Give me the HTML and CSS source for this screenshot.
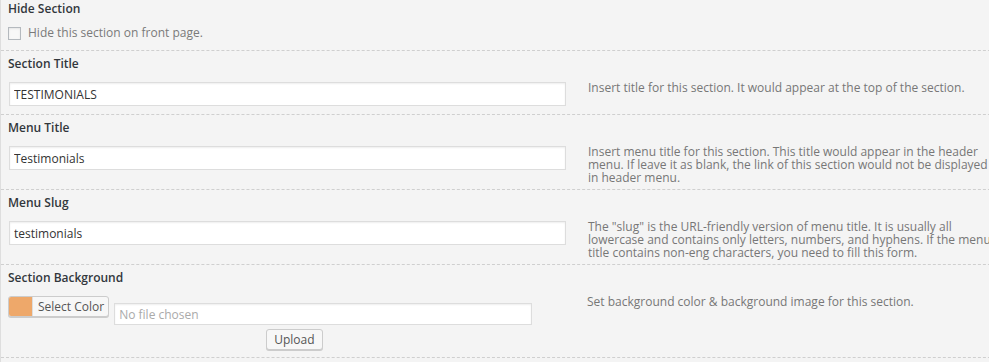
FILE: index.html
```html
<!DOCTYPE html>
<html lang="en">
<head>
    <meta charset="UTF-8">
    <meta name="viewport" content="width=device-width, initial-scale=1.0">
    <title>Section Settings</title>
    <link rel="stylesheet" href="styles.css">
</head>
<body>

<div class="panel">
    <div class="field field-first">
        <div class="field-label">Hide Section</div>
        <label class="check">
            <span class="check-box"></span>
            <span class="check-text">Hide this section on front page.</span>
        </label>
    </div>

    <div class="field">
        <div class="field-label">Section Title</div>
        <div class="field-row">
            <div class="control">
                <input type="text" class="text-input" value="TESTIMONIALS">
            </div>
            <p class="desc">Insert title for this section. It would appear at the top of the section.</p>
        </div>
    </div>

    <div class="field">
        <div class="field-label">Menu Title</div>
        <div class="field-row">
            <div class="control">
                <input type="text" class="text-input" value="Testimonials">
            </div>
            <p class="desc">Insert menu title for this section. This title would appear in the header menu. If leave it as blank, the link of this section would not be displayed in header menu.</p>
        </div>
    </div>

    <div class="field">
        <div class="field-label">Menu Slug</div>
        <div class="field-row">
            <div class="control">
                <input type="text" class="text-input" value="testimonials">
            </div>
            <p class="desc">The "slug" is the URL-friendly version of menu title. It is usually all lowercase and contains only letters, numbers, and hyphens. If the menu title contains non-eng characters, you need to fill this form.</p>
        </div>
    </div>

    <div class="field">
        <div class="field-label">Section Background</div>
        <div class="field-row">
            <div class="control control-bg">
                <button type="button" class="color-btn">
                    <span class="color-swatch"></span>
                    <span class="color-text">Select Color</span>
                </button>
                <div class="media">
                    <input type="text" class="file-input" placeholder="No file chosen" readonly>
                    <button type="button" class="upload-btn">Upload</button>
                </div>
            </div>
            <p class="desc">Set background color &amp; background image for this section.</p>
        </div>
    </div>
</div>

</body>
</html>
```

FILE: styles.css
```css
body {
    margin: 0;
    background-color: #f4f4f4;
    font-family: 'Open Sans', 'Liberation Sans', sans-serif;
    overflow: hidden;
}
.panel {
    width: 1030px;
    border-left: 1px solid #dedede;
    min-height: 362px;
}
.field {
    padding: 5px 0 4px 7px;
    border-bottom: 1px dashed #cfcfcf;
}
.field-first {
    padding-top: 1px;
    padding-bottom: 10px;
}
.field-label {
    font-size: 12px;
    line-height: 16px;
    font-weight: 600;
    color: #32373c;
}
.check {
    display: flex;
    align-items: center;
    gap: 7px;
    margin-top: 9px;
}
.check-box {
    width: 11px;
    height: 11px;
    border: 1px solid #b4b9be;
    background-color: #f8f8f8;
    box-shadow: inset 0 1px 2px rgba(0,0,0,0.08);
}
.check-text {
    font-size: 12px;
    line-height: 14px;
    color: #7a7a7a;
}
.field-row {
    display: flex;
    gap: 22px;
    margin-top: 10px;
}
.control {
    flex: 0 0 557px;
    padding-bottom: 4px;
}
.text-input, .file-input {
    display: block;
    box-sizing: border-box;
    margin: 0 0 0 1px;
    width: 557px;
    height: 24px;
    padding: 0 4px;
    border: 1px solid #dddddd;
    background-color: #fff;
    box-shadow: inset 0 1px 2px rgba(0,0,0,0.07);
    font-family: inherit;
    font-size: 12px;
    color: #333;
    outline: none;
}
.desc {
    flex: 0 0 408px;
    margin: -1px 0 1px;
    font-size: 12px;
    line-height: 13px;
    color: #777;
}
.control-bg {
    display: flex;
    gap: 5px;
    padding-bottom: 3px;
}
.color-btn {
    display: flex;
    align-items: stretch;
    height: 21px;
    padding: 0;
    border: 1px solid #cccccc;
    border-radius: 3px;
    background-color: #f7f7f7;
    box-shadow: 0 1px 0 #cccccc;
    font-family: inherit;
    cursor: pointer;
    overflow: hidden;
}
.color-swatch {
    width: 23px;
    background-color: #eea86a;
    border-right: 1px solid #dddddd;
}
.color-text {
    padding: 0 4px 0 5px;
    font-size: 12px;
    line-height: 19px;
    color: #555;
}
.media {
    display: flex;
    flex-direction: column;
    align-items: flex-start;
    gap: 4px;
    margin-top: 7px;
}
.file-input {
    margin: 0;
    width: 418px;
    height: 22px;
}
.file-input::placeholder {
    color: #aaaaaa;
}
.upload-btn {
    margin-left: 152px;
    height: 21px;
    padding: 0 7px;
    border: 1px solid #cccccc;
    border-radius: 3px;
    background-color: #f7f7f7;
    box-shadow: 0 1px 0 #cccccc;
    font-family: inherit;
    font-size: 12px;
    line-height: 19px;
    color: #555;
    cursor: pointer;
}
```
